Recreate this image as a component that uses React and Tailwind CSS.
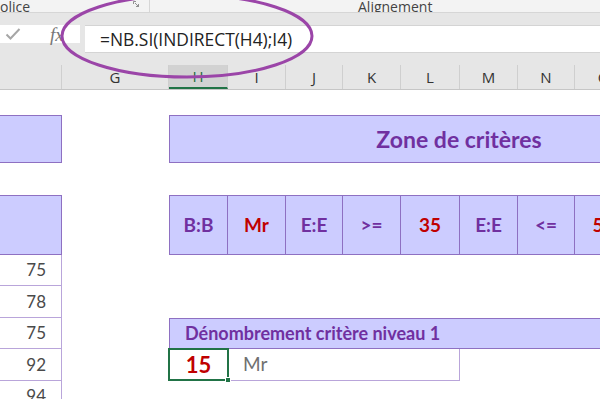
import React from "react";

const cols = [62, 107, 59, 58, 57, 58, 59, 58, 57, 58];
const letters = ["", "G", "H", "I", "J", "K", "L", "M", "N", "O"];
const crit = [
  { t: "B:B", red: false },
  { t: "Mr", red: true },
  { t: "E:E", red: false },
  { t: ">=", red: false },
  { t: "35", red: true },
  { t: "E:E", red: false },
  { t: "<=", red: false },
  { t: "50", red: true },
];
const data = ["75", "78", "75", "92", "94"];

export default function App() {
  const cell = "font-['Lato','Liberation_Sans',sans-serif]";
  return (
    <div className="relative w-[600px] h-[399px] overflow-hidden bg-white">
      {/* Ribbon strip */}
      <div className="h-[13px] bg-[#f3f3f3] border-b border-[#d6d6d6] flex items-end text-[14px] leading-[14px] text-[#444] font-['Open_Sans','Liberation_Sans',sans-serif] overflow-hidden">
        <div className="w-[150px] h-full flex items-end justify-between pr-[10px] border-r border-[#d6d6d6] relative">
          <span className="-mb-[2px]">olice</span>
          <svg width="6" height="6" viewBox="0 0 6 6" className="mb-[5px]">
            <path d="M0.5 0.5H3M0.5 0.5V3M2 2L5.5 5.5M5.5 3V5.5H3" stroke="#777" strokeWidth="0.8" fill="none" />
          </svg>
        </div>
        <div className="w-[208px]" />
        <span className="-mb-[2px]">Alignement</span>
      </div>
      {/* gray spacer */}
      <div className="h-[12px] bg-[#e6e6e6]" />
      {/* Formula bar */}
      <div className="h-[28px] bg-[#e6e6e6] flex">
        <div className="w-[80px] h-[18px] bg-white flex items-center">
          <svg width="16" height="14" viewBox="0 0 16 14" className="ml-[5px]">
            <path d="M1.5 7.5L5.5 11.5L14.5 2" stroke="#a6a6a6" strokeWidth="2" fill="none" />
          </svg>
          <span className="ml-[29px] text-[19px] italic text-[#777] font-['Liberation_Serif',serif] leading-none">fx</span>
        </div>
        <div className="w-[5px]" />
        <div className="flex-1 bg-white border-y border-[#d4d4d4] flex items-center pl-[15px] text-[17.4px] text-[#222] font-['Open_Sans','Liberation_Sans',sans-serif]">
          =NB.SI(INDIRECT(H4);I4)
        </div>
      </div>
      <div className="h-[12px] bg-[#e6e6e6]" />
      {/* Column headers */}
      <div className="h-[25px] flex bg-[#e6e6e6] border-b border-[#c6c6c6] font-['Open_Sans','Liberation_Sans',sans-serif] text-[15px] text-[#333]">
        {cols.map((w, i) => (
          <div
            key={i}
            style={{ width: w }}
            className={
              "shrink-0 h-full flex items-center justify-center border-r border-[#cfcfcf] " +
              (i === 2 ? "bg-[#d2d2d2] border-b-2 border-b-[#217346] text-[#1f6b40]" : "")
            }
          >
            {letters[i]}
          </div>
        ))}
      </div>
      {/* Sheet grid */}
      <div className="grid grid-cols-[62px_107px_59px_58px_57px_58px_59px_58px_57px_58px] grid-rows-[25px_48px_32px_60px_31px_32px_31px_32px_31px]">
        {/* left box 1 */}
        <div className="col-start-1 row-start-2 bg-[#ccccff] border border-l-0 border-[#8e70c2]" />
        {/* zone de critères */}
        <div className="col-start-3 col-span-8 row-start-2 relative">
          <div className={"absolute left-0 top-0 h-[48px] w-[580px] bg-[#ccccff] border border-[#8e70c2] flex items-center justify-center text-[23px] font-bold text-[#7030a0] " + cell}>
            Zone de critères
          </div>
        </div>
        {/* left box 2 */}
        <div className="col-start-1 row-start-4 bg-[#ccccff] border border-l-0 border-[#8e70c2]" />
        {/* criteria */}
        {crit.map((c, i) => (
          <div
            key={i}
            className={
              "row-start-4 bg-[#ccccff] border-y border-r border-[#8e70c2] flex items-center justify-center text-[19px] font-bold " +
              cell +
              (i === 0 ? " border-l " : " ") +
              (c.red ? "text-[#c00000]" : "text-[#7030a0]")
            }
            style={{ gridColumnStart: i + 3 }}
          >
            {c.t}
          </div>
        ))}
        {/* data column */}
        {data.map((d, i) => (
          <div
            key={i}
            className={"col-start-1 border-b border-r border-[#b9a5da] flex items-center justify-end pr-[15px] text-[17px] text-[#4a4a4a] " + cell}
            style={{ gridRowStart: i + 5 }}
          >
            {d}
          </div>
        ))}
        {/* dénombrement header */}
        <div className="col-start-3 col-span-8 row-start-7 relative">
          <div className={"absolute left-0 top-0 h-[31px] w-[500px] bg-[#ccccff] border border-[#8e70c2] flex items-center pl-[15px] text-[18px] font-bold text-[#7030a0] " + cell}>
            Dénombrement critère niveau 1
          </div>
        </div>
        {/* result cell */}
        <div className="col-start-3 row-start-8 relative">
          <div className={"absolute -left-[1px] -top-[1px] w-[61px] h-[33px] border-2 border-[#217346] flex items-center justify-center text-[22px] font-bold text-[#c00000] " + cell}>
            15
            <div className="absolute -right-[4px] -bottom-[4px] w-[6px] h-[6px] bg-[#217346] border border-white" />
          </div>
        </div>
        <div className={"col-start-4 col-span-4 row-start-8 border-b border-r border-[#b9a5da] flex items-center pl-[15px] text-[19px] text-[#707070] " + cell}>
          Mr
        </div>
      </div>
      {/* ellipse annotation */}
      <svg className="absolute left-0 top-0 pointer-events-none" width="600" height="399">
        <ellipse cx="187" cy="36" rx="125" ry="41" fill="none" stroke="#9b45a8" strokeWidth="3" />
      </svg>
    </div>
  );
}
